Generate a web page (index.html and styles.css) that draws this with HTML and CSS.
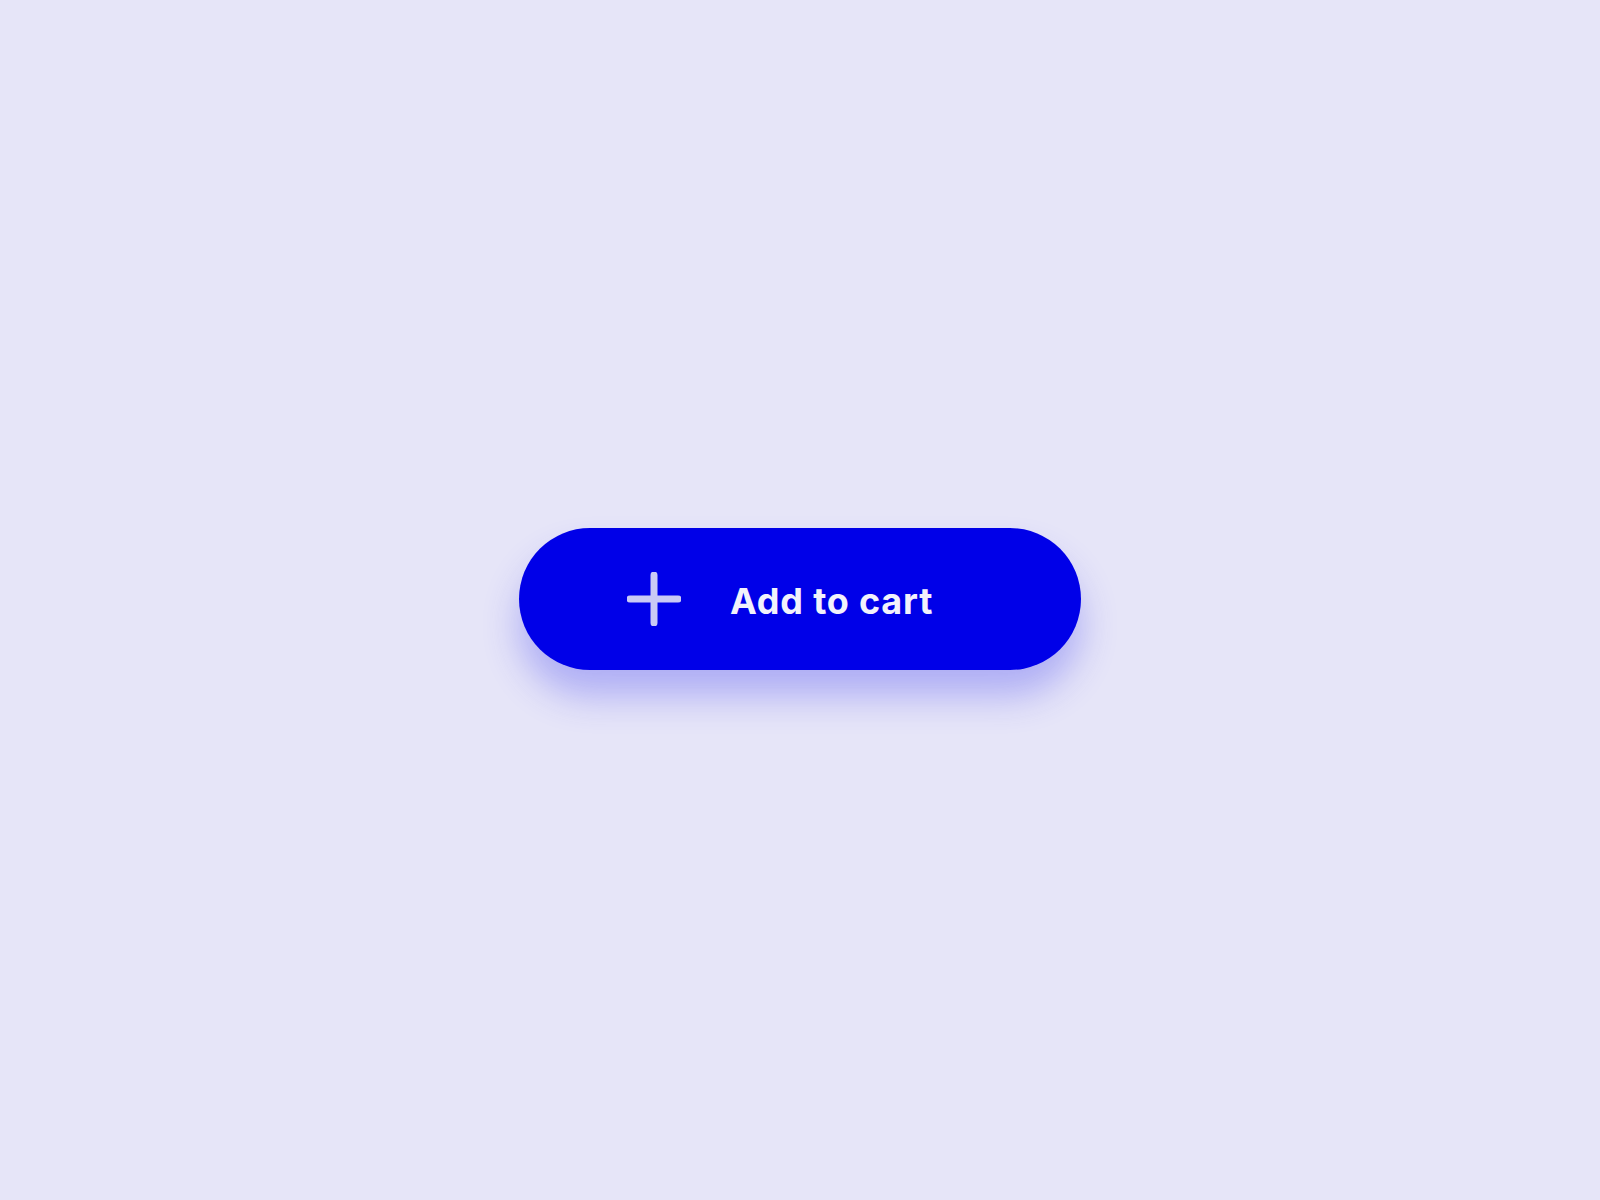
FILE: index.html
```html
<!DOCTYPE html>
<html>
<head>
<meta charset="utf-8">
<link rel="stylesheet" href="styles.css">
</head>
<body>
<main class="stage">
  <button class="cart-btn" type="button">
    <svg class="plus" viewBox="0 0 54 54" width="54" height="54" aria-hidden="true">
      <path d="M27 3 V51 M3 27 H51" fill="none" stroke="#c9c9f5" stroke-width="7" stroke-linecap="round"/>
    </svg>
    <span class="label">Add to cart</span>
  </button>
</main>
</body>
</html>
```
FILE: styles.css
```css
html, body {
  margin: 0;
  padding: 0;
  height: 100%;
}
body {
  background: #e6e5f8;
  font-family: Inter, "Noto Sans", sans-serif;
}
.stage {
  height: 100vh;
  display: flex;
  align-items: center;
  justify-content: center;
}
.cart-btn {
  width: 562px;
  height: 142px;
  border: none;
  border-radius: 71px;
  background: #0000e8;
  display: flex;
  align-items: center;
  padding: 0 0 0 108px;
  gap: 49px;
  box-shadow: 0 26px 36px rgba(60, 60, 240, 0.32);
  cursor: pointer;
  margin-top: -2px;
}
.plus {
  display: block;
  flex: none;
}
.label {
  color: #f2f2fc;
  font-family: Inter, "Noto Sans", sans-serif;
  font-weight: 700;
  font-size: 36px;
  letter-spacing: 0.8px;
  line-height: 1;
  margin-top: 4px;
}
```
